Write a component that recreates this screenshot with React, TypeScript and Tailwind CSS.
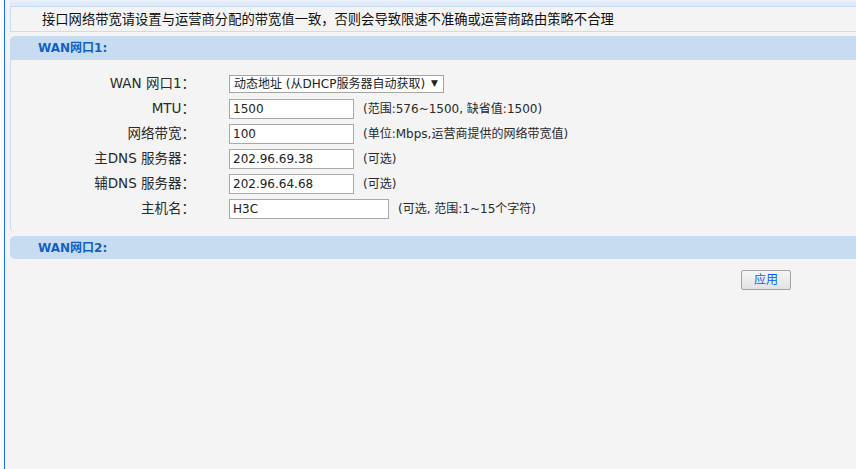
import React from "react";

const font = { fontFamily: '"DejaVu Sans", "Noto Sans CJK SC", sans-serif' };

function Row({ label, children, hint }: { label: string; children: React.ReactNode; hint?: string }) {
  return (
    <div className="flex h-[25px] items-center">
      <div className="w-[184px] text-right text-[13.5px] text-[#2a2a2a] whitespace-nowrap">{label}</div>
      <div className="w-[34px]" />
      {children}
      {hint && <div className="ml-[9px] text-[12px] text-[#2a2a2a] whitespace-nowrap">{hint}</div>}
    </div>
  );
}

function Input({ value, w }: { value: string; w: string }) {
  return (
    <div className={`${w} h-[20px] border border-[#a9a9a9] bg-white pl-[3px] text-[12px] leading-[18px] text-[#222]`}>{value}</div>
  );
}

export default function App() {
  return (
    <div className="flex h-[469px] w-[856px] overflow-hidden bg-[#f4f4f4]" style={font}>
      <div className="w-[4px] shrink-0 bg-white" />
      <div className="w-[1px] shrink-0 bg-[#1a6fff]" />
      <div className="w-[5px] shrink-0" />
      <div className="flex min-w-0 flex-1 flex-col">
        <div className="h-[7px] border-b border-[#c6daf0] bg-gradient-to-b from-[#e9f1fc] to-[#dce9f9]" />
        <div className="flex h-[25px] items-center border-b border-l border-[#c9dcf0] pl-[31px] pt-[1px] text-[13.3px] text-[#111] whitespace-nowrap">
          接口网络带宽请设置与运营商分配的带宽值一致，否则会导致限速不准确或运营商路由策略不合理
        </div>
        <div className="h-[4px]" />
        <div className="flex h-[24px] items-center rounded-tl-[5px] bg-[#c7dcf0] pl-[28px] text-[12px] font-bold text-[#1160c4]">
          WAN网口1:
        </div>
        <div className="rounded-bl-[5px] border-l border-[#cbdcef] pb-[11px] pt-[11px]">
          <Row label="WAN 网口1：">
            <div className="flex h-[18px] w-[215px] items-center justify-between border border-[#a5a5a5] bg-white pl-[4px] pr-[5px] text-[12px] text-[#222]">
              <span className="whitespace-nowrap">动态地址 (从DHCP服务器自动获取)</span>
              <span className="text-[9px]">▼</span>
            </div>
          </Row>
          <Row label="MTU：" hint="(范围:576~1500, 缺省值:1500)">
            <Input value="1500" w="w-[125px]" />
          </Row>
          <Row label="网络带宽：" hint="(单位:Mbps,运营商提供的网络带宽值)">
            <Input value="100" w="w-[125px]" />
          </Row>
          <Row label="主DNS 服务器：" hint="(可选)">
            <Input value="202.96.69.38" w="w-[125px]" />
          </Row>
          <Row label="辅DNS 服务器：" hint="(可选)">
            <Input value="202.96.64.68" w="w-[125px]" />
          </Row>
          <Row label="主机名：" hint="(可选, 范围:1~15个字符)">
            <Input value="H3C" w="w-[160px]" />
          </Row>
        </div>
        <div className="h-[4px]" />
        <div className="flex h-[23px] items-center rounded-l-[5px] bg-[#c7dcf0] pl-[28px] text-[12px] font-bold text-[#1160c4]">
          WAN网口2:
        </div>
        <div className="flex justify-end pr-[65px] pt-[11px]">
          <button className="flex h-[20px] w-[50px] items-center justify-center rounded-[2px] border border-[#a3a3a3] bg-gradient-to-b from-[#f6f6f6] to-[#e2e2e2] text-[12px] text-[#0a5cff]">
            应用
          </button>
        </div>
      </div>
    </div>
  );
}
